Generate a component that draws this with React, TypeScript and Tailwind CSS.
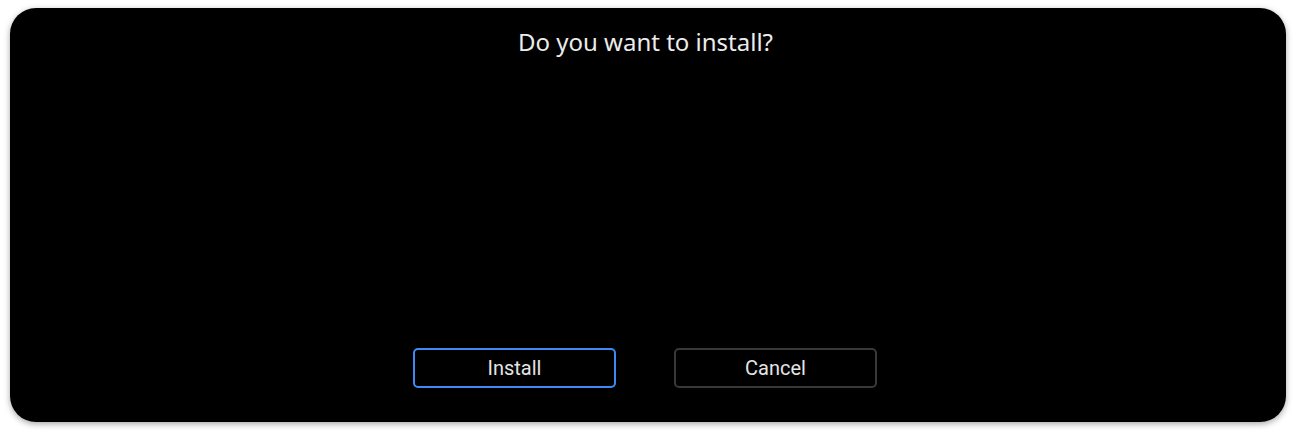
export default function App() {
  return (
    <div className="h-[437px] w-[1296px] bg-white pl-[10px] pr-[10px] pt-[8px]">
      <div className="flex h-[414px] flex-col items-center rounded-[26px] bg-black shadow-[0_2px_6px_rgba(0,0,0,0.35)]">
        <h1 className="mt-[17px] mr-[5px] text-[24px] leading-[34px] text-[#ececec] [font-family:'Noto_Sans',sans-serif]">
          Do you want to install?
        </h1>
        <div className="mt-auto mb-[34px] mr-[6px] flex gap-[58px] [font-family:Roboto,sans-serif]">
          <button className="h-[40px] w-[203px] rounded-[5px] border-2 border-[#3c8af2] text-[20px] text-[#e4e4e4]">
            Install
          </button>
          <button className="h-[40px] w-[203px] rounded-[5px] border-2 border-[#383838] text-[20px] text-[#e4e4e4]">
            Cancel
          </button>
        </div>
      </div>
    </div>
  );
}
